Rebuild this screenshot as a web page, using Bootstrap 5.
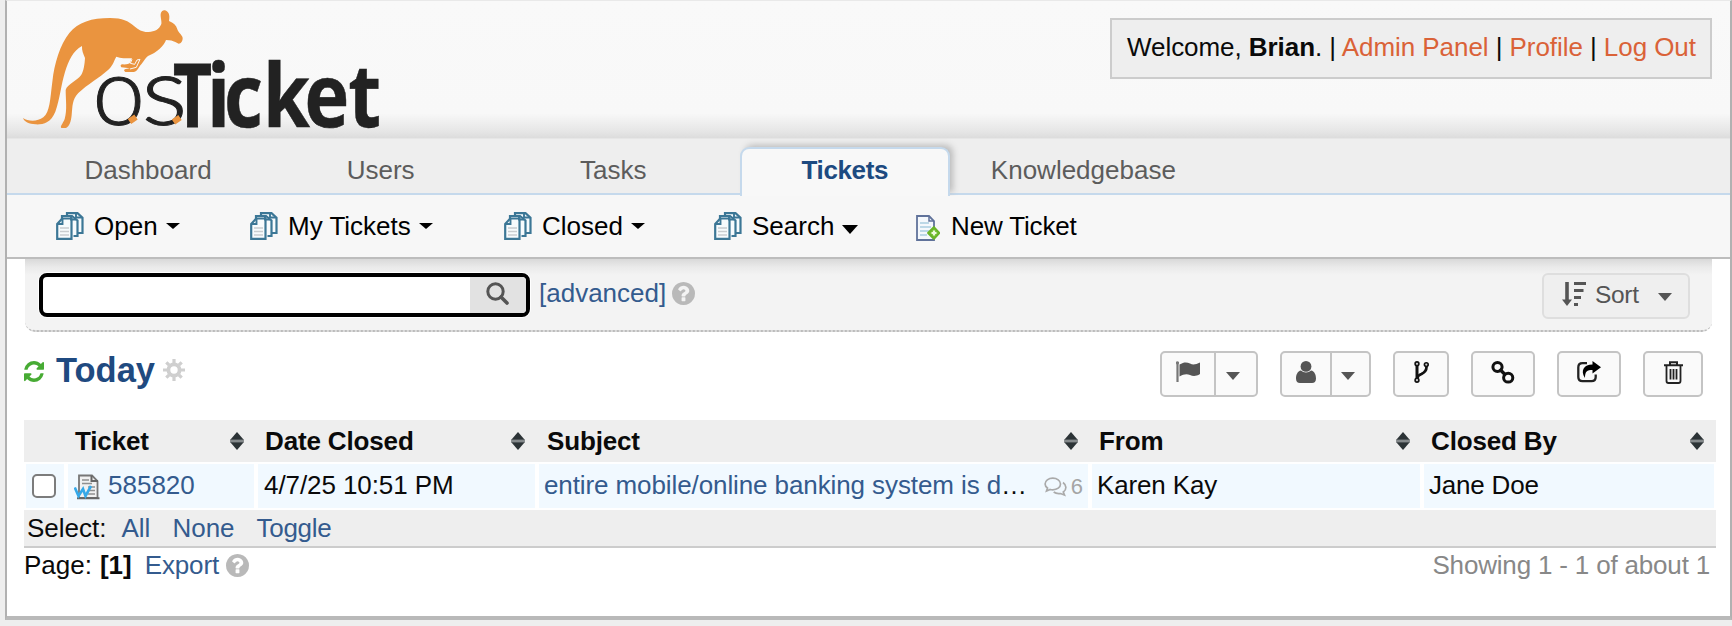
<!DOCTYPE html>
<html lang="en">
<head>
<meta charset="utf-8">
<title>osTicket :: Staff Control Panel</title>
<link href="https://cdn.jsdelivr.net/npm/bootstrap@5.3.0/dist/css/bootstrap.min.css" rel="stylesheet">
<style>
  body{background:#eee;font:26px/30px "Liberation Sans",Arial,sans-serif;color:#0a0a0a;overflow:hidden}
  a{color:#345b8e;text-decoration:none}
  .shell{margin-left:5px;height:620px;border:2px solid #b1b1b1;border-top:1px solid #e9e9e9;border-bottom:4px solid #b9b9b9;background:#fff}
  .top-area{height:137px;background:linear-gradient(#f9f9f9 0,#f8f8f8 82%,#e6e6e6 95%,#dcdcdc 100%);padding:17px 18px 0 0}
  .brand-svg{width:370px;height:136px;margin-top:-17px}
  .user-box{height:61px;width:602px;border:2px solid #ccc;background:#eee;padding:12px 0 0 15px;white-space:pre;letter-spacing:-.06px}
  .user-box a{color:#da6238}
  .main-tabs{height:57px;background:#eee;padding:8px 0 0 37px;border-bottom:2px solid #c5d9ec;border-top:1px solid #e6e6e6}
  .main-tabs .nav-link{width:208px;margin-right:24.6px;height:48px;padding:0;line-height:46px;text-align:center;color:#5c5c5c}
  .main-tabs .nav-link.active{height:49px;background:#f8f8f8;color:#1d4a80;font-weight:bold;border:2px solid #c5d9ec;border-bottom:0;border-radius:9px 9px 0 0;line-height:42px;box-shadow:4px -3px 6px -1px #bbb;clip-path:inset(-9px -10px 0 -9px);letter-spacing:-.4px;width:210px;margin-left:-2px}
  .main-tabs .know{margin-left:5px}
  .sub-tabs{height:64px;background:#f7f7f7;border-bottom:2px solid #bdbdbd;padding-left:49px}
  .sub-tabs a{color:#000;height:61px;display:flex;align-items:center}
  .sub-tabs svg{flex:none}
  .sub-tabs span{margin:0 8px 0 10px}
  .tri{display:inline-block;border:7px solid transparent;border-top:6px solid #000;border-bottom:0}
  .search-bar{height:73px;margin:0 18px;background:linear-gradient(#d9d9d9 0,#eaeaea 8px,#f3f3f3 16px);padding:14px 22px 0 14px;border-radius:0 0 10px 10px;border-bottom:2px dotted #bcbcbc}
  .search-box{width:491px;height:44px;border:4px solid #000;border-radius:8px;box-shadow:0 0 0 1px #fff;background:#fff;overflow:hidden}
  .search-box input{border:0;background:none;min-width:0;outline:0}
  .search-box button{width:56px;background:#e2e2e2;border:0;padding:0 2px 3px 0}
  .sort-btn{width:148px;height:46px;border:2px solid #dedede;border-radius:6px;background:#efefef;color:#555;font-size:24.5px;letter-spacing:-.3px;padding:0;line-height:40px}
  .title-row{height:88px;padding:19px 27px 0 17px}
  .title-row h2{font-size:34.5px;line-height:38px;font-weight:bold;color:#1f4a80;margin:0 0 0 12px}
  .tool{height:46px;border:2px solid #c4c4c4;border-radius:5px;background:#fafafa;display:flex;padding:0}
  .tool span{display:flex;justify-content:center;align-items:center;padding-bottom:4px}
  .tool span+span{border-left:2px solid #c4c4c4;padding:4px 6px 0 0}
  .tool .tri,.sort-btn .tri{border-top-color:#555;border-top-width:8px}
  .tickets{width:1692px;margin:0 0 0 17px;table-layout:fixed;border-collapse:separate;border-spacing:0;color:#0a0a0a}
  .tickets th{height:42px;background:#eee;padding:0 12px 0 9px;letter-spacing:-.15px}
  .tickets td{height:48px;background:#f1f9ff;border:2px solid #fff;padding:0 0 3px 6px;white-space:nowrap;vertical-align:middle}
  .tickets tfoot td{height:38px;background:#eee;border:0;border-bottom:2px solid #ccc;padding:0 0 1px 3px}
  .check{display:block;width:24px;height:24px;border:2px solid #7c7c7c;border-radius:5px;background:#fff;margin-top:2px}
  .count{color:#a5a5a5;font-size:22px}
  .pager{height:34px;padding:2px 20px 0 17px}
  svg{display:block}
</style>
</head>
<body>
<svg width="0" height="0" class="position-absolute">
  <defs>
    <symbol id="stack" viewBox="0 0 28 28">
      <g fill="#f7fbfd" stroke="#3c7796" stroke-width="2.200">
        <path d="M11 5V1.200h10.500l5 4.500V21h-5"/>
        <path d="M6 8V4h10l5.500 4.500V24h-4"/>
        <path d="M1.200 12l5-5.500h9.300V26.800H1.200z"/>
      </g>
      <path d="M1.500 12H6.500V7M15 3.500v4h5M20 1.500v4h6" fill="none" stroke="#3c7796" stroke-width="1.900"/>
      <path d="M4 16h9M4 19.500h9M4 23h9" stroke="#c9cdd0" stroke-width="1.600"/>
    </symbol>
    <symbol id="help" viewBox="128 128 1536 1536">
      <path fill="#b9b9b9" d="M1024 1376v-192q0-14-9-23t-23-9h-192q-14 0-23 9t-9 23v192q0 14 9 23t23 9h192q14 0 23-9t9-23zm256-672q0-88-55.500-163t-138.500-116-170-41q-243 0-371 213-15 24 8 42l132 100q7 6 19 6 16 0 25-12 53-68 86-92 34-24 86-24 48 0 85.500 26t37.500 59q0 38-20 61t-68 45q-63 28-115.500 86.500t-52.500 125.500v36q0 14 9 23t23 9h192q14 0 23-9t9-23q0-19 21.500-49.500t54.500-49.500q32-18 49-28.500t46-35 44.500-48 28-60.500 12.500-81zm384 192q0 209-103 385.500t-279.500 279.500-385.500 103-385.500-103-279.500-279.500-103-385.500 103-385.500 279.500-279.500 385.500-103 385.500 103 279.500 279.500 103 385.500z"/>
    </symbol>
    <symbol id="updown" viewBox="0 0 14 18">
      <path d="M7 0l6.500 7.500v3L7 18 .5 10.500v-3z" fill="#2c3336"/><path d="M.5 7.600h13v2.800H.5z" fill="#858a8c"/>
    </symbol>
  </defs>
</svg>

<div class="shell">
  <header class="top-area d-flex justify-content-between align-items-start">
    <svg class="brand-svg" viewBox="7 1 370 136" overflow="visible">
      <g transform="scale(.33333)" fill="#ea943f">
        <path d="M69 354C84 365 112 366 130 352C150 334 150 300 157 245C163 190 180 135 208 99C235 66 275 54 330 54C368 54 385 63 402 78C416 90 428 97 446 96C464 95 478 88 484 72C486 66 481 52 482 42C483 34 490 29 495 31C505 35 511 43 507 63C520 68 529 76 532 88C535 98 549 108 548 115C548 124 543 131 536 131C528 129 525 121 498 120C492 137 470 158 444 168C436 174 430 186 424 193C416 201 412 215 402 216L376 216Q368 210 377 207L390 205L364 202Q358 194 368 193Q385 194 390 188L396 175C378 174 362 176 349 170C343 178 341 195 325 209C300 232 262 253 235 279C216 299 218 318 215 345C213 365 208 380 198 384L184 384C179 379 190 369 194 357C202 330 197 300 197 270C202 252 231 243 243 226C251 214 254 192 255 174C250 162 245 152 246 138C219 152 206 182 195 216C183 255 180 296 166 335C152 370 128 374 106 373C88 372 72 365 69 354Z"/>
        <path d="M396 178L391 190L404 193L411 180L420 178L409 202L390 207" fill="none" stroke="#f8f8f8" stroke-width="3"/>
      </g>
      <g fill="#222" stroke="#222">
        <text transform="translate(92.500 125) scale(1 1)" font-family="Lato" font-weight="300" font-size="94" stroke-width="1">o</text>
        <text transform="translate(141.500 125) scale(1.150 1)" font-family="Lato" font-weight="300" font-size="94" stroke-width="1">s</text>
        <text transform="translate(173 126.700) scale(.765 1)" font-family="Open Sans" font-weight="700" font-size="88" stroke-width="1">T</text>
        <text transform="translate(0 126.700) scale(.86 1)" x="240.700 260.500 305.800 354 405" font-family="Open Sans" font-weight="700" font-size="88" stroke-width=".5">icket</text>
      </g>
      <path d="M129.500 121.500L136 117M173.500 122L180 117.500" stroke="#ea943f" stroke-width="6"/>
    </svg>
    <div class="user-box">Welcome, <b>Brian</b>. | <a href="#">Admin Panel</a> | <a href="#">Profile</a> | <a href="#">Log Out</a></div>
  </header>

  <nav class="main-tabs nav flex-nowrap">
    <a class="nav-link" href="#">Dashboard</a>
    <a class="nav-link" href="#">Users</a>
    <a class="nav-link" href="#">Tasks</a>
    <a class="nav-link active" href="#">Tickets</a>
    <a class="nav-link know" href="#">Knowledgebase</a>
  </nav>

  <nav class="sub-tabs d-flex">
    <a href="#" style="width:194px"><svg width="28" height="28"><use href="#stack"/></svg><span>Open</span><i class="tri"></i></a>
    <a href="#" style="width:254px"><svg width="28" height="28"><use href="#stack"/></svg><span>My Tickets</span><i class="tri"></i></a>
    <a href="#" style="width:210px"><svg width="28" height="28"><use href="#stack"/></svg><span>Closed</span><i class="tri"></i></a>
    <a href="#" style="width:202px"><svg width="28" height="28"><use href="#stack"/></svg><span>Search</span><i class="tri mt-2" style="border-width:9px 8px 0"></i></a>
    <a href="#">
      <svg width="24" height="26" viewBox="0 0 24 26" class="mt-1">
        <path d="M1 1h12l5 5v19H1z" fill="#f4f8fc" stroke="#60729a" stroke-width="1.800"/>
        <path d="M13 1v5h5" fill="none" stroke="#60729a" stroke-width="1.500"/>
        <path d="M4 8h9M4 12h11M4 16h9M4 20h7" stroke="#a9cde0" stroke-width="1.600"/>
        <path d="M18 12l5.500 6-5.500 6-6-6z" fill="#74be30" stroke="#69b428" stroke-width="1.800" stroke-linejoin="round"/>
        <path d="M18 15.500v5M15.500 18h5" stroke="#eefbdc" stroke-width="2.200"/>
      </svg><span style="letter-spacing:-.15px;margin-left:11px">New Ticket</span></a>
  </nav>

  <div class="search-bar d-flex">
    <div class="search-box d-flex">
      <input type="text" class="flex-fill" aria-label="Search">
      <button type="button" class="d-flex align-items-center justify-content-center">
        <svg width="23" height="23" viewBox="0 0 23 23" fill="none" stroke="#555"><circle cx="9.500" cy="9.500" r="7.700" stroke-width="3"/><path d="M15 15l6 6" stroke-width="3.600" stroke-linecap="round"/></svg>
      </button>
    </div>
    <a href="#" class="text-nowrap" style="margin:5px 0 0 9px">[advanced]</a>
    <svg width="23" height="23" style="margin:9px 0 0 6px"><use href="#help"/></svg>
    <button type="button" class="sort-btn ms-auto d-flex align-items-center">
      <svg width="24" height="24" viewBox="0 0 24 24" fill="none" stroke="#555" style="margin:-4px 9px 0 18px"><path d="M5 0v19" stroke-width="3.600"/><path d="M0 17.500h10L5 24z" fill="#555" stroke="none"/><path d="M12 1.500h12M12 8.500h9.500M12 15.500h7M12 22.500h4" stroke-width="3"/></svg>
      <span style="margin-top:-2px">Sort</span><i class="tri" style="margin-left:19px;margin-top:2px"></i>
    </button>
  </div>

  <div class="title-row d-flex">
    <svg width="20" height="21" viewBox="128 128 1536 1536" preserveAspectRatio="none" fill="#47ab34" style="margin-top:10px"><path d="M1639 1056q0 5-1 7-64 268-268 434.500t-478 166.500q-146 0-282.500-55t-243.500-157l-129 129q-19 19-45 19t-45-19-19-45v-448q0-26 19-45t45-19h448q26 0 45 19t19 45-19 45l-137 137q71 66 161 102t187 36q134 0 250-65t186-179q11-17 53-117 8-23 30-23h192q13 0 22.500 9.500t9.500 22.500zm25-800v448q0 26-19 45t-45 19h-448q-26 0-45-19t-19-45 19-45l138-138q-148-137-349-137-134 0-250 65t-186 179q-11 17-53 117-8 23-30 23h-199q-13 0-22.500-9.500t-9.500-22.500v-7q65-268 270-434.500t480-166.500q146 0 284 55.500t245 156.500l130-129q19-19 45-19t45 19 19 45z"/></svg>
    <h2>Today</h2>
    <svg width="22" height="22" viewBox="-11 -11 22 22" stroke="#cfcfcf" fill="none" style="margin:8px 0 0 8px"><circle r="5.600" stroke-width="3.800"/><path stroke-width="3.200" d="M0-6.500V-11M0 6.500V11M-6.500 0H-11M6.500 0H11M4.800 4.800l2.900 2.900M-4.800-4.800l-2.900-2.900M4.800-4.800l2.900-2.900M-4.800 4.800l-2.900 2.900"/></svg>

    <div class="ms-auto d-flex" style="gap:22px">
      <button class="tool" type="button"><span style="width:52px"><svg width="24" height="22" viewBox="0 0 24 22"><path d="M1.500 1v20" stroke="#777" stroke-width="2.200"/><circle cx="1.500" cy="1.800" r="1.600" fill="#777"/><path d="M3.500 3.500C8 .8 11 1 14 2.600S20 3.500 24 1.500V13c-4 2.500-7 2.400-10 1S7.500 13 3.500 15.500z" fill="#555"/></svg></span><span style="width:42px"><i class="tri"></i></span></button>
      <button class="tool" type="button"><span style="width:48px"><svg width="20" height="22" viewBox="0 0 20 22" fill="#555"><circle cx="10" cy="5.400" r="5.400"/><path d="M5 9.500C1.500 10 0 14 0 17.500 0 20.500 1.500 22 4 22h12c2.500 0 4-1.500 4-4.500 0-3.500-1.500-7.500-5-8-2.500 2.500-7.500 2.500-10 0z"/></svg></span><span style="width:39px"><i class="tri"></i></span></button>
      <button class="tool" type="button"><span style="width:52px"><svg width="15" height="22" viewBox="0 0 15 22" fill="none" stroke="#111"><path d="M3 3v16" stroke-width="3"/><path d="M12.500 3.500v2.500c0 4-2 5.500-5 7-2.500 1-4 2-4 4" stroke-width="2.700"/><g fill="#ccc" stroke-width="1.600"><circle cx="3" cy="2.800" r="1.900"/><circle cx="12.300" cy="3.600" r="1.900"/><circle cx="3" cy="19.200" r="1.900"/></g></svg></span></button>
      <button class="tool" type="button"><span style="width:60px"><svg width="24" height="23" viewBox="0 0 24 23" fill="none" stroke="#111" stroke-width="3"><ellipse cx="6.500" cy="6" rx="4.600" ry="4.400"/><ellipse cx="17.200" cy="16.700" rx="4.600" ry="4.400"/><path d="M8.500 8l6.500 6.500" stroke-width="3.400"/></svg></span></button>
      <button class="tool" type="button"><span style="width:60px"><svg width="24" height="22" viewBox="0 0 24 22"><path d="M10 2.200H5.500Q1.300 2.200 1.300 6.500v9.500q0 4.200 4.200 4.200h9q4.200 0 4.200-4.200v-2.500" fill="none" stroke="#222" stroke-width="2.300"/><path d="M15.500 0L24 6.200l-8.500 6.300V9C10 9 8 10.500 8 17 3 9.500 7 3.500 15.500 3.500z" fill="#000"/></svg></span></button>
      <button class="tool" type="button"><span style="width:56px"><svg width="19" height="23" viewBox="0 0 19 23" fill="none" stroke="#222"><path d="M0 4.200h19M6 4V1.300h7V4" stroke-width="2"/><path d="M2.500 4.500V20q0 2 2 2h10q2 0 2-2V4.500M6.500 8v10.500M9.500 8v10.500M12.500 8v10.500" stroke-width="1.800"/></svg></span></button>
    </div>
  </div>

  <table class="tickets">
    <colgroup><col style="width:42px"><col style="width:190px"><col style="width:281px"><col style="width:553px"><col style="width:332px"><col style="width:294px"></colgroup>
    <thead>
      <tr>
        <th></th>
        <th><div class="d-flex justify-content-between align-items-center">Ticket<svg width="14" height="18"><use href="#updown"/></svg></div></th>
        <th><div class="d-flex justify-content-between align-items-center">Date Closed<svg width="14" height="18"><use href="#updown"/></svg></div></th>
        <th><div class="d-flex justify-content-between align-items-center" style="padding-left:1px">Subject<svg width="14" height="18"><use href="#updown"/></svg></div></th>
        <th><div class="d-flex justify-content-between align-items-center">From<svg width="14" height="18"><use href="#updown"/></svg></div></th>
        <th><div class="d-flex justify-content-between align-items-center">Closed By<svg width="14" height="18"><use href="#updown"/></svg></div></th>
      </tr>
    </thead>
    <tbody>
      <tr>
        <td><span class="check" role="checkbox" aria-checked="false"></span></td>
        <td><div class="d-flex align-items-center">
          <svg width="26" height="26" viewBox="0 0 26 26" class="me-2 mt-1"><path d="M5 24V1.500h13L23.500 7v17z" fill="#f1f1f1" stroke="#777" stroke-width="1.800"/><path d="M17.500 1.500V7H24M3 24.300h22.500" fill="none" stroke="#666" stroke-width="2"/><path d="M8 6h7M8 9.500h10M14 13h7M14 16.500h7M14 20h7" stroke="#909090" stroke-width="1.500"/><path d="M.8 13.500l3.700 8.500L9 15l2.500 7L17 12" fill="none" stroke="#35a8e8" stroke-width="2.600"/></svg>
          <a href="#">585820</a></div></td>
        <td style="letter-spacing:-.08px">4/7/25 10:51 PM</td>
        <td style="padding-left:5px"><div class="d-flex align-items-center"><span style="letter-spacing:-.1px"><a href="#">entire mobile/online banking system is d</a>…</span>
          <svg width="23" height="20" viewBox="0 0 23 20" fill="none" stroke="#aaa" stroke-width="1.700" style="margin:5px 4px 0 auto"><path d="M8.800 1.200C13 1.200 16.500 3.700 16.500 7s-3.500 5.800-7.700 5.800q-1.400 0-2.600-.3L2.500 14l1-3Q1.100 9.500 1.100 7C1.100 3.700 4.500 1.200 8.800 1.200z"/><path d="M19 5.500c3.800 2.800 3.800 7 .3 9.500l1.200 3-4-1.500c-2.500.4-5-.1-6.800-1.500"/></svg>
          <span class="count pt-1" style="margin-right:5px">6</span></div></td>
        <td style="letter-spacing:-.15px;padding-left:5px">Karen Kay</td>
        <td style="letter-spacing:-.2px;padding-left:5px">Jane Doe</td>
      </tr>
    </tbody>
    <tfoot><tr><td colspan="6"><div class="d-flex">Select:<a href="#" style="margin-left:15px">All</a><a href="#" style="margin-left:22px">None</a><a href="#" style="margin-left:22px;letter-spacing:-.3px">Toggle</a></div></td></tr></tfoot>
  </table>

  <div class="pager d-flex">
    <span>Page:</span><b class="ms-2">[1]</b><a href="#" style="margin-left:13px;letter-spacing:-.15px">Export</a>
    <svg width="23" height="23" style="margin:4px 0 0 7px"><use href="#help"/></svg>
    <span class="ms-auto" style="color:#888;letter-spacing:-.18px">Showing 1 - 1 of about 1</span>
  </div>
</div>
<script src="https://cdn.jsdelivr.net/npm/bootstrap@5.3.0/dist/js/bootstrap.bundle.min.js"></script>
</body>
</html>
